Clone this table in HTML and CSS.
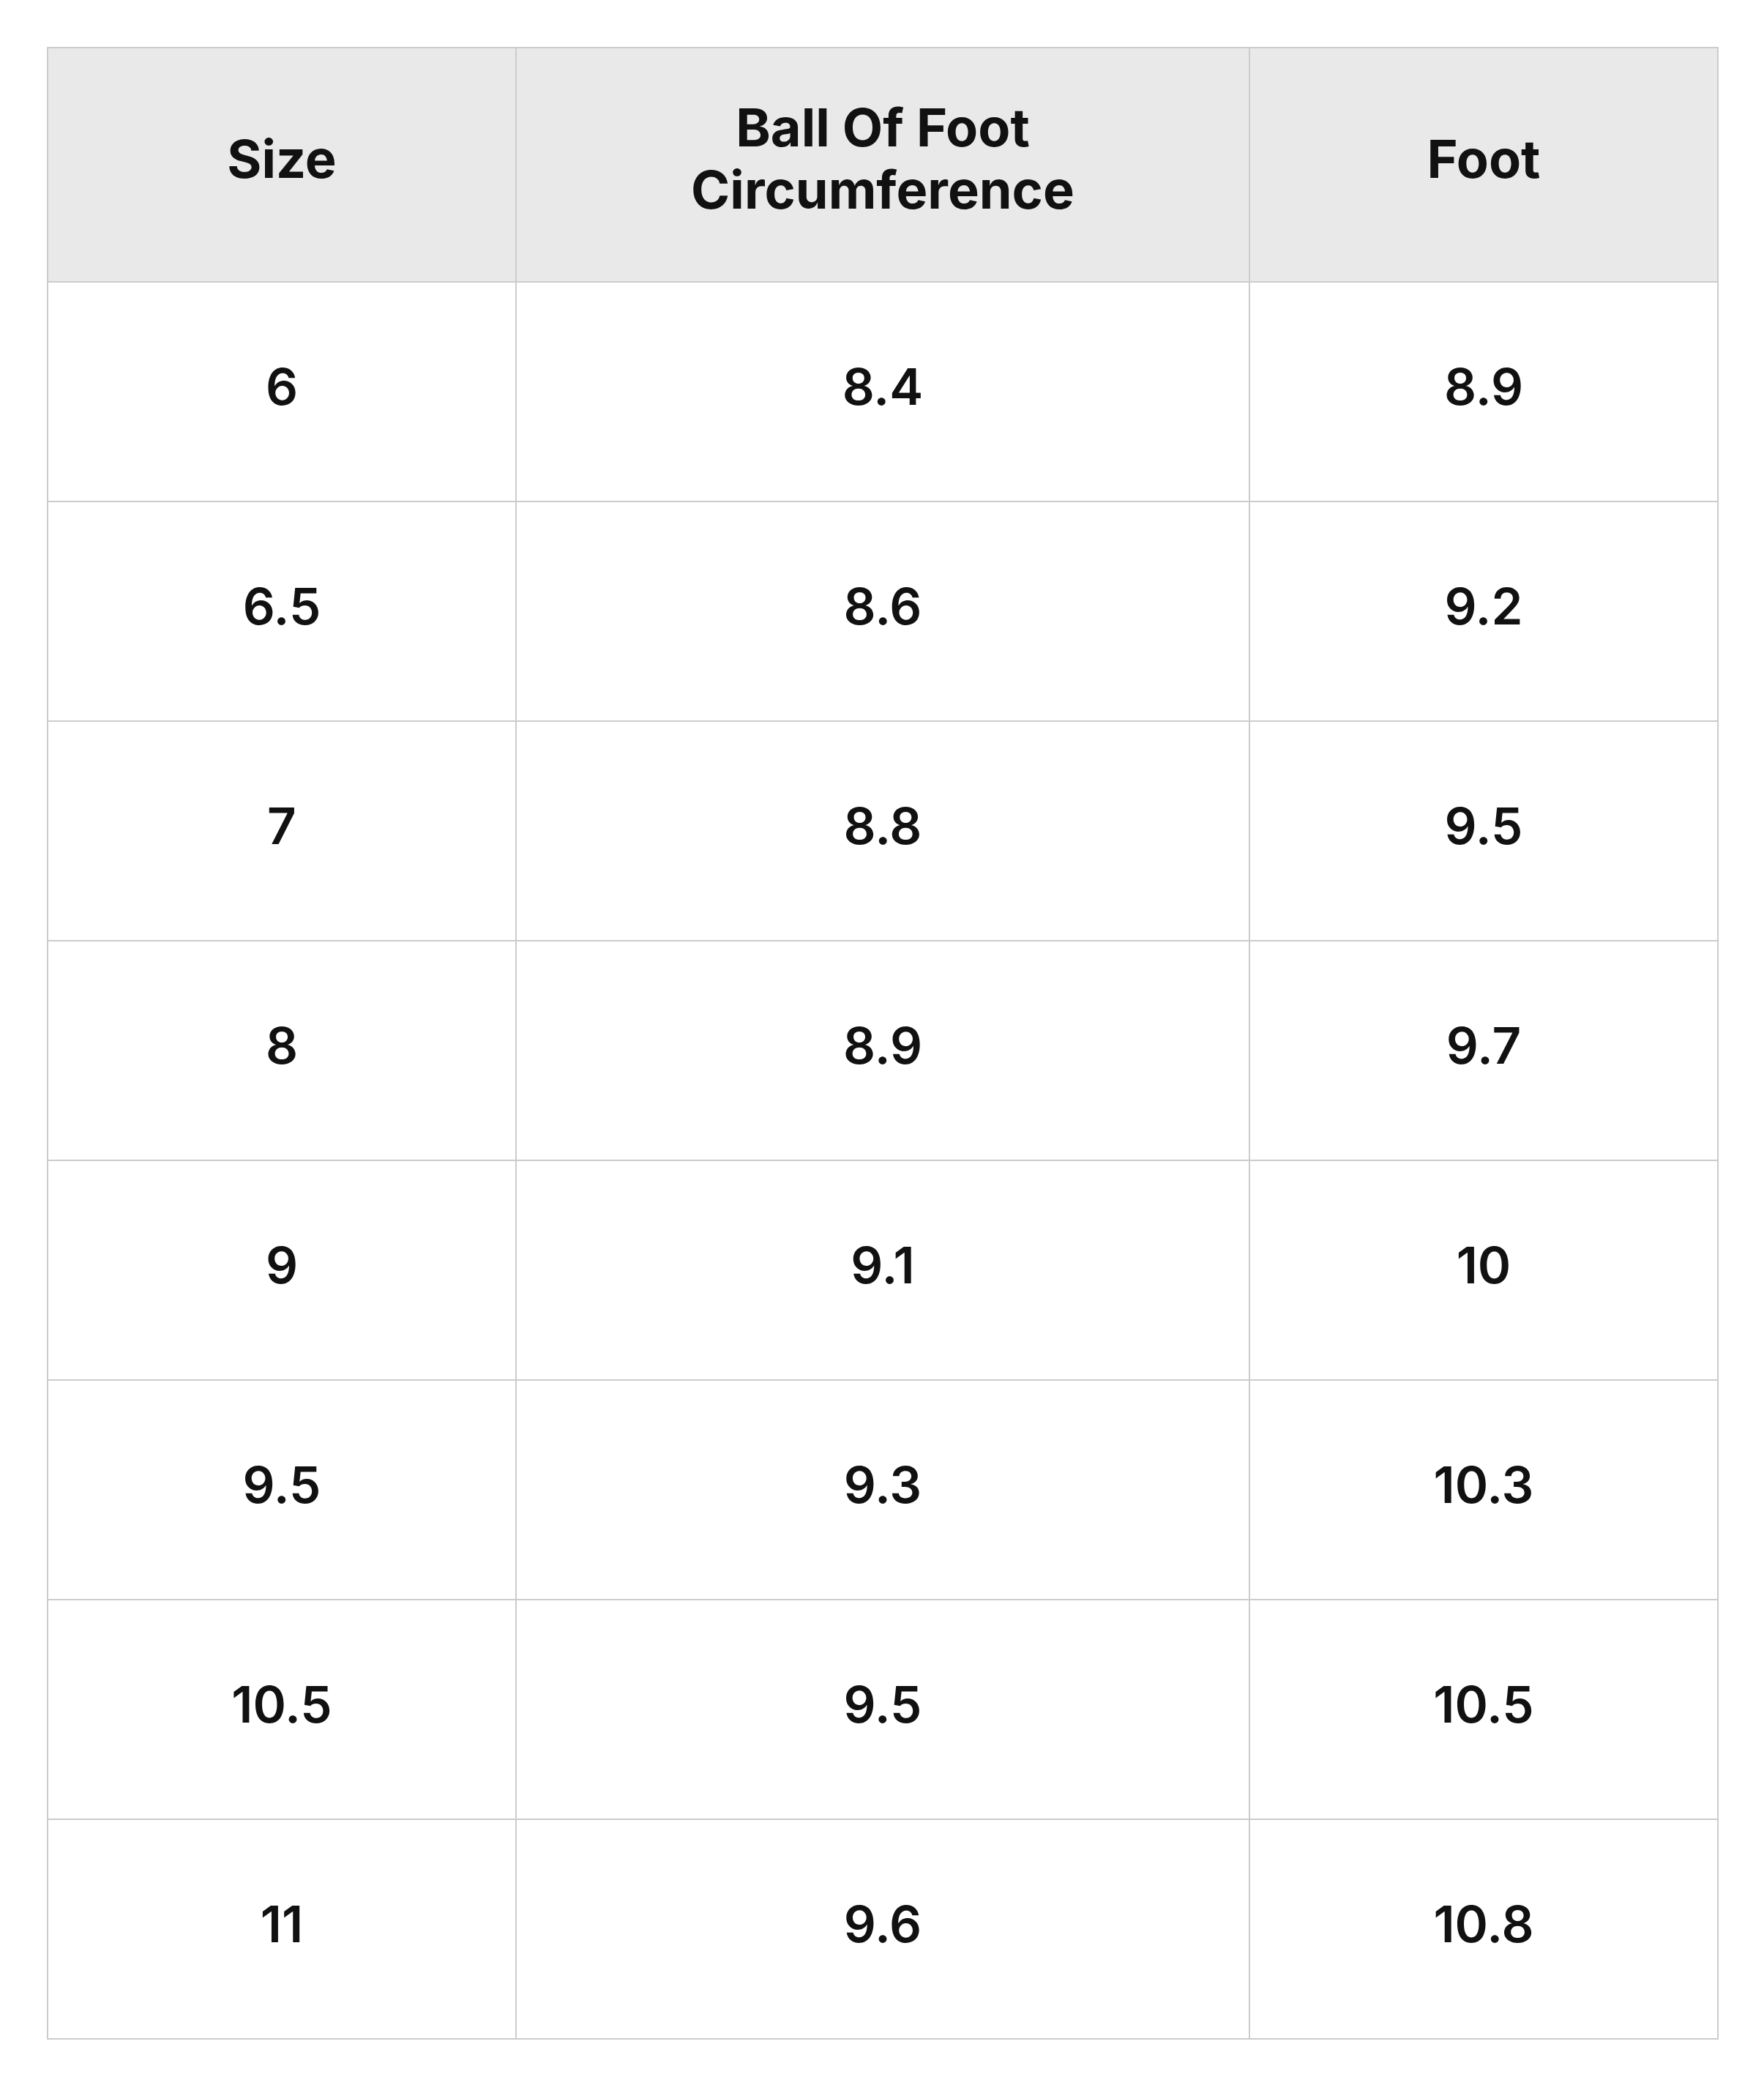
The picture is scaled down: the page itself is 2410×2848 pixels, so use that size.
FILE: index.html
```html
<!DOCTYPE html>
<html lang="en">
<head>
<meta charset="utf-8">
<title>Size chart</title>
<link rel="stylesheet" href="styles.css">
</head>
<body>
<table class="size-table">
  <colgroup>
    <col class="col-side">
    <col class="col-mid">
    <col class="col-side">
  </colgroup>
  <thead>
    <tr class="head-row">
      <th>Size</th>
      <th>Ball Of Foot<br>Circumference</th>
      <th>Foot</th>
    </tr>
  </thead>
  <tbody>
    <tr><td>6</td><td>8.4</td><td>8.9</td></tr>
    <tr><td>6.5</td><td>8.6</td><td>9.2</td></tr>
    <tr><td>7</td><td>8.8</td><td>9.5</td></tr>
    <tr><td>8</td><td>8.9</td><td>9.7</td></tr>
    <tr><td>9</td><td>9.1</td><td>10</td></tr>
    <tr><td>9.5</td><td>9.3</td><td>10.3</td></tr>
    <tr><td>10.5</td><td>9.5</td><td>10.5</td></tr>
    <tr><td>11</td><td>9.6</td><td>10.8</td></tr>
  </tbody>
</table>
</body>
</html>
```
FILE: styles.css
```css
* { box-sizing: border-box; }
html, body { background: #fff; }
body {
  margin: 0;
  padding: 64px;
  font-family: Inter, "Noto Sans", "Liberation Sans", sans-serif;
  color: #111;
}
.size-table {
  width: 2284px;
  table-layout: fixed;
  border-collapse: separate;
  border-spacing: 0;
  border-top: 2px solid #cccccc;
  border-left: 2px solid #cccccc;
}
.col-side { width: 640px; }
.col-mid { width: 1002px; }
.size-table th,
.size-table td {
  border-right: 2px solid #cccccc;
  border-bottom: 2px solid #cccccc;
  text-align: center;
  vertical-align: middle;
  padding: 0;
  font-size: 72px;
  line-height: 85px;
  letter-spacing: 0;
}
.size-table th {
  background: #e9e9e9;
  font-weight: 700;
  height: 320px;
  padding-bottom: 18px;
}
.size-table td {
  font-size: 69px;
  font-weight: 600;
  height: 300px;
  padding-bottom: 14px;
}
```
